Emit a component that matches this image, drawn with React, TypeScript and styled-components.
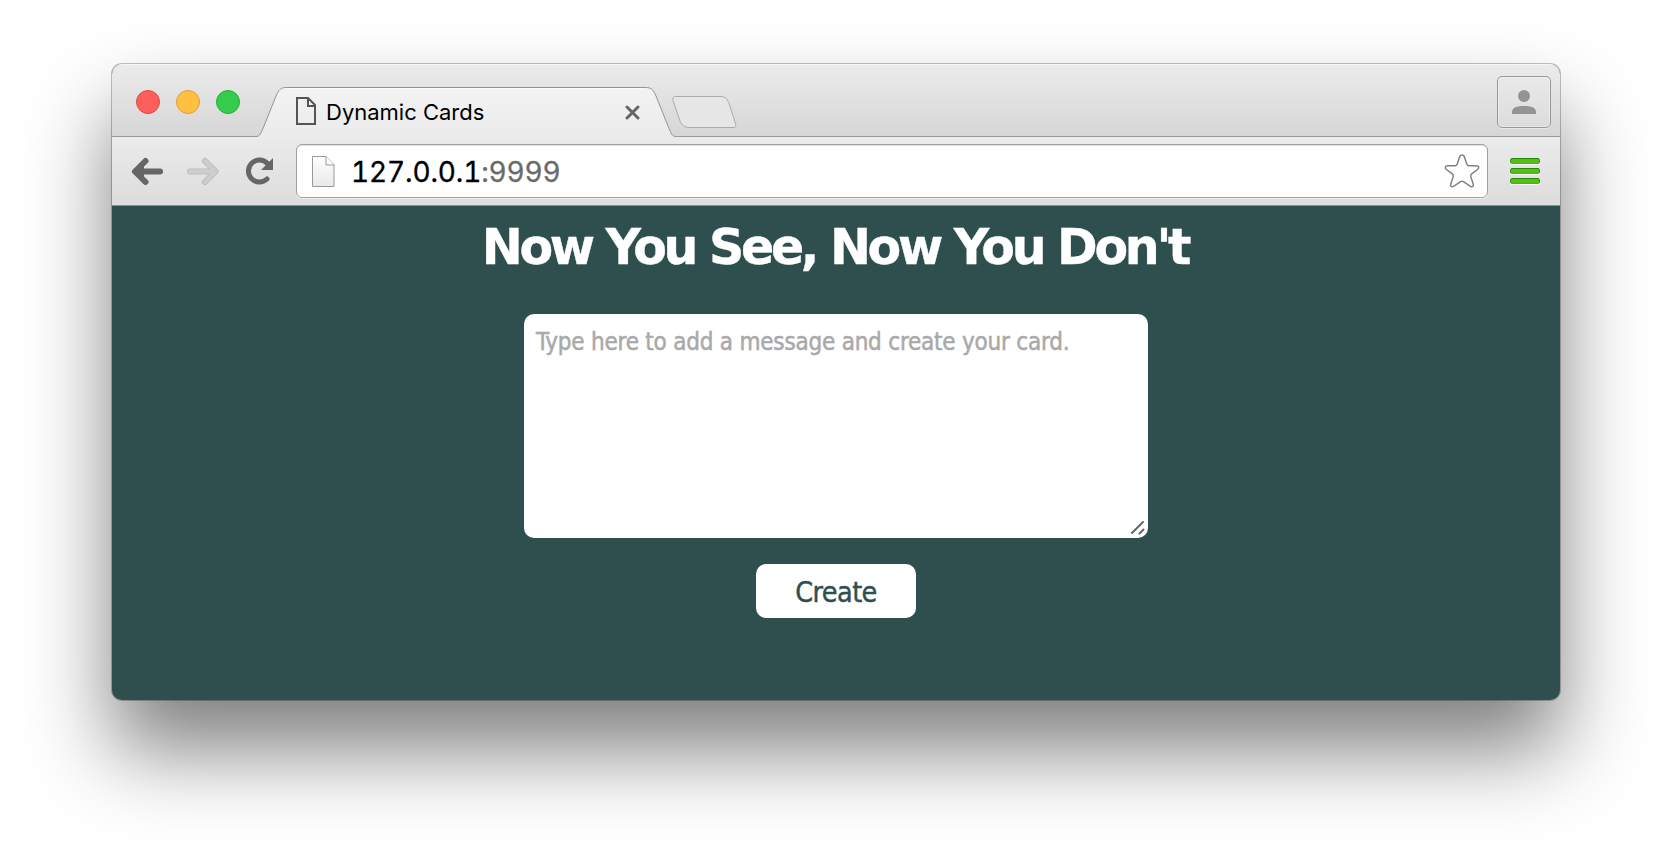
import React from "react";
import styled, { createGlobalStyle } from "styled-components";

const GlobalStyle = createGlobalStyle`
  * { box-sizing: border-box; }
  body { margin: 0; background: #fff; overflow: hidden; }
`;

const pageFont = `"DejaVu Sans Condensed", "DejaVu Sans", "Noto Sans", sans-serif`;
const headingFont = `"DejaVu Sans", "Noto Sans", sans-serif`;
const chromeFont = `Inter, Roboto, "Liberation Sans", sans-serif`;

const Desktop = styled.main`
  height: 860px;
  padding: 64px 112px 0;
  background: #fff;
`;

const Window = styled.section`
  display: flex;
  flex-direction: column;
  width: 1448px;
  height: 636px;
  border-radius: 10px;
  background: #2f4f4f;
  box-shadow: 0 0 0 1px rgba(0, 0, 0, 0.24), 0 50px 84px rgba(0, 0, 0, 0.5);
  overflow: hidden;
`;

const TabStrip = styled.header`
  display: flex;
  height: 73px;
  background: linear-gradient(#ebebeb, #d6d6d6);
  box-shadow: inset 0 1px 0 #f6f6f6, inset 0 -1px 0 #999;
`;

const Lights = styled.div`
  display: flex;
  gap: 16px;
  padding: 26px 0 0 24px;
  width: 144px;
  flex: none;
`;

const Light = styled.span<{ $fill: string; $edge: string }>`
  width: 24px;
  height: 24px;
  border-radius: 50%;
  background: ${(p) => p.$fill};
  border: 1px solid ${(p) => p.$edge};
`;

const Tab = styled.div`
  display: grid;
  width: 420px;
  height: 73px;
  flex: none;
  > * { grid-area: 1 / 1; }
`;

const TabLabel = styled.div`
  display: flex;
  align-items: flex-start;
  padding: 33px 36.5px 0 40px;
  font: 22px/30px ${chromeFont};
  color: #000;
`;

const TabTitle = styled.span`
  flex: 1;
  margin: 0 0 0 10px;
`;

const CloseIcon = styled.svg`
  margin-top: 8px;
`;

const NewTab = styled.svg`
  margin: 30px 0 0 -5px;
`;

const UserButton = styled.button`
  display: grid;
  place-items: center;
  width: 54px;
  height: 52px;
  margin: 12px 9px 0 auto;
  padding: 0;
  border: 1px solid #989898;
  border-radius: 5px;
  background: linear-gradient(#e9e9e9, #dcdcdc);
  box-shadow: inset 0 0 0 1px rgba(255, 255, 255, 0.35), 0 1px 0 rgba(255, 255, 255, 0.4);
`;

const Toolbar = styled.nav`
  display: flex;
  align-items: flex-start;
  height: 69px;
  flex: none;
  background: linear-gradient(#ebebeb, #dcdcdc);
  border-bottom: 1px solid #8a8f8c;
`;

const NavIcons = styled.svg`
  flex: none;
`;

const AddressBar = styled.div`
  display: flex;
  align-items: center;
  width: 1192px;
  height: 54px;
  margin-top: 7px;
  padding: 0 7px 0 15px;
  border: 1px solid #a0a0a0;
  border-radius: 6px;
  background: #fff;
  box-shadow: inset 0 1px 1px rgba(0, 0, 0, 0.12), 0 1px 0 rgba(255, 255, 255, 0.6);
  font: 28px/34px ${chromeFont};
  color: #000;
`;

const Address = styled.span`
  flex: 1;
  margin-left: 16px;
  padding-top: 2px;
  font-variant-numeric: tabular-nums;
  font-kerning: none;
  letter-spacing: -0.15px;
  -webkit-text-stroke: 0.3px currentColor;
`;

const Port = styled.span`
  color: #6a6a6a;
`;

const Menu = styled.div`
  display: flex;
  flex-direction: column;
  gap: 4px;
  margin: 21px 0 0 22px;
`;

const MenuLine = styled.span`
  width: 30px;
  height: 6px;
  border-radius: 2.5px;
  background: #55bf13;
  border: 1px solid #379d0a;
  border-bottom-color: #4db30f;
  border-top-color: #23870a;
  box-shadow: 0 1px 0 #fff;
`;

const Page = styled.div`
  display: flex;
  flex-direction: column;
  align-items: center;
  flex: 1;
`;

const Heading = styled.h1`
  margin: 13px 0 0;
  padding-right: 2px;
  color: #fff;
  font: bold 49px/58px ${headingFont};
  letter-spacing: -3.3px;
  white-space: nowrap;
  -webkit-text-stroke: 0.4px #fff;
`;

const MessageBox = styled.div`
  display: grid;
  width: 624px;
  height: 224px;
  margin-top: 37px;
  > * { grid-area: 1 / 1; }
`;

const Message = styled.textarea`
  width: 100%;
  height: 100%;
  padding: 13px 12px;
  border: 0;
  border-radius: 10px;
  background: #fff;
  resize: none;
  font: 24px/30px ${pageFont};
  letter-spacing: -0.22px;
  &::placeholder {
    color: #a9a9a9;
    opacity: 1;
    -webkit-text-stroke: 0.5px #a9a9a9;
  }
`;

const Grip = styled.svg`
  place-self: end;
  margin: 0 3px 3px 0;
`;

const CreateButton = styled.button`
  width: 160px;
  height: 54px;
  margin-top: 26px;
  padding: 3px 0 0;
  border: 0;
  border-radius: 10px;
  background: #fff;
  color: #2f4f4f;
  font: 28.5px/51px ${pageFont};
  letter-spacing: -0.6px;
  -webkit-text-stroke: 0.4px #2f4f4f;
`;

export default function App() {
  return (
    <Desktop>
      <GlobalStyle />
      <Window>
        <TabStrip>
          <Lights>
            <Light $fill="#fe5f5a" $edge="#e2463f" />
            <Light $fill="#ffc042" $edge="#e0a032" />
            <Light $fill="#35cb4b" $edge="#24b036" />
          </Lights>
          <Tab>
            <svg width="420" height="73" viewBox="0 0 420 73">
              <defs>
                <linearGradient id="tabFill" x1="0" y1="0" x2="0" y2="1">
                  <stop offset="0" stopColor="#f3f3f3" />
                  <stop offset="1" stopColor="#ebebeb" />
                </linearGradient>
              </defs>
              <path
                d="M0 73V72.500C4 72.500 5 69 7 64.500L20 32C22.500 26 25 23.500 30 23.500H390C395 23.500 397.500 26 400 32L413 64.500C415 69 416 72.500 420 72.500V73Z"
                fill="url(#tabFill)"
              />
              <path
                d="M0 72.500C4 72.500 5 69 7 64.500L20 32C22.500 26 25 23.500 30 23.500H390C395 23.500 397.500 26 400 32L413 64.500C415 69 416 72.500 420 72.500"
                fill="none"
                stroke="#939393"
              />
              <path d="M30 24.500H390" stroke="#fafafa" />
            </svg>
            <TabLabel>
              <svg width="20" height="28" viewBox="0 0 20 28" fill="none" stroke="#555" strokeWidth="2">
                <path d="M1 1H12L19 8V27H1Z" />
                <path d="M12 1V9H19" />
              </svg>
              <TabTitle>Dynamic Cards</TabTitle>
              <CloseIcon width="15" height="15" viewBox="0 0 15 15">
                <path d="M2 2L13 13M13 2L2 13" stroke="#666" strokeWidth="3" strokeLinecap="round" />
              </CloseIcon>
            </TabLabel>
          </Tab>
          <NewTab width="66" height="36" viewBox="0 0 66 36">
            <path
              d="M5 2.500H49C54 2.500 56 4.500 58 9L64 28C65.500 32 65 33.500 62 33.500H19C13 33.500 11 31 9 27L2.500 8C1 4 2 2.500 5 2.500Z"
              fill="#e6e6e6"
              stroke="#aaa"
            />
          </NewTab>
          <UserButton aria-label="Profile">
            <svg width="24" height="24" viewBox="0 0 24 24" fill="#949494">
              <circle cx="12" cy="6" r="6" />
              <path d="M0 24V22C0 18 4 16 12 16S24 18 24 22V24Z" />
            </svg>
          </UserButton>
        </TabStrip>
        <Toolbar>
          <NavIcons width="184" height="68" viewBox="0 0 184 68" fill="none">
            <g stroke="#666" strokeWidth="6" strokeLinecap="round" strokeLinejoin="round">
              <path d="M33.500 24L23 34.500L33.500 45" />
              <path d="M24 34.500H48" />
            </g>
            <path d="M20 34.500L32 23V46Z" fill="#666" />
            <g stroke="#b8b8b8" strokeWidth="6" strokeLinecap="round" strokeLinejoin="round">
              <path d="M93 24L103.500 34.500L93 45M78 34.500H103" />
            </g>
            <g stroke="#cdcdcd" strokeWidth="4.400" strokeLinecap="round" strokeLinejoin="round">
              <path d="M93 24L103.500 34.500L93 45M78 34.500H103" />
            </g>
            <path
              d="M155.500 26.500A11 11 0 1 0 155 42"
              stroke="#666"
              strokeWidth="5"
              strokeLinecap="round"
            />
            <path d="M161 21V33H149Z" fill="#666" />
          </NavIcons>
          <AddressBar>
            <svg width="23" height="31" viewBox="0 0 23 31">
              <defs>
                <linearGradient id="sheet" x1="0" y1="0" x2="0" y2="1">
                  <stop offset="0" stopColor="#fff" />
                  <stop offset="1" stopColor="#e8e8e8" />
                </linearGradient>
              </defs>
              <path d="M0.500 0.500H14L22 8.500V30.500H0.500Z" fill="url(#sheet)" stroke="#999" />
              <path d="M14 0.500V9H22" fill="#fff" stroke="#999" />
            </svg>
            <Address>
              127.0.0.1<Port>:9999</Port>
            </Address>
            <svg width="36" height="36" viewBox="-0.500 -0.500 37 37">
              <path
                d="M15.700 3C16.800 1 19.200 1 20.300 3L22.800 10.500Q23.300 12.500 25 12.500H32.500C35.500 12.500 36 15 34 16.500L28 21Q26.500 22 27 24L29.500 31C30.300 33.700 28.500 35 26.300 33.500L19.500 29Q18 28 16.500 29L9.700 33.500C7.500 35 5.700 33.700 6.500 31L9 24Q9.500 22 8 21L2 16.500C0 15 .5 12.500 3.500 12.500H11Q12.700 12.500 13.200 10.500Z"
                fill="#fff"
                stroke="#808080"
                strokeWidth="1.500"
                strokeLinejoin="round"
              />
            </svg>
          </AddressBar>
          <Menu>
            <MenuLine />
            <MenuLine />
            <MenuLine />
          </Menu>
        </Toolbar>
        <Page>
          <Heading>Now You See, Now You Don't</Heading>
          <MessageBox>
            <Message placeholder="Type here to add a message and create your card." />
            <Grip width="15" height="15" viewBox="0 0 15 15">
              <path d="M2 13L13 2M9.500 13.500L13.500 9.500" stroke="#666" strokeWidth="2" strokeLinecap="round" />
            </Grip>
          </MessageBox>
          <CreateButton>Create</CreateButton>
        </Page>
      </Window>
    </Desktop>
  );
}
